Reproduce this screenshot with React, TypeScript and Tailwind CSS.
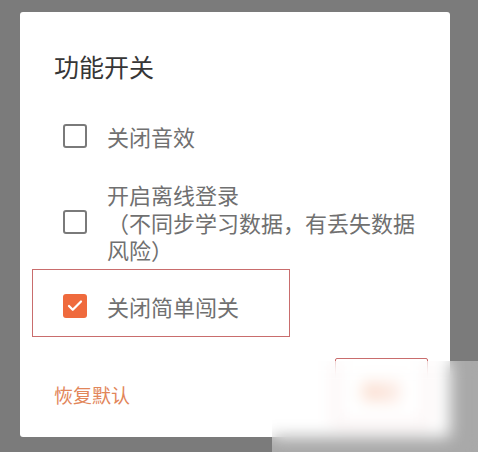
import { Check } from "lucide-react";

const font = { fontFamily: '"Noto Sans CJK SC", "Noto Sans", sans-serif' };

function Box({ checked }: { checked?: boolean }) {
    if (checked) {
        return (
            <span className="w-[24px] h-[24px] shrink-0 rounded-[3px] bg-[#ef6a3d] flex items-center justify-center">
                <Check size={18} strokeWidth={3} className="text-white" />
            </span>
        );
    }
    return <span className="w-[24px] h-[24px] shrink-0 rounded-[3px] border-[2.5px] border-[#7a7a7a] bg-white" />;
}

export default function App() {
    return (
        <div style={font} className="relative w-[478px] h-[452px] overflow-hidden bg-[#7b7b7b] pt-[12px] pl-[20px]">
            {/* Dialog */}
            <div className="w-[430px] h-[425px] bg-white rounded-[3px] flex flex-col pl-[12px] pt-[38px]">
                <h2 className="pl-[22px] text-[25px] leading-[32px] text-[#363636]">功能开关</h2>

                <div className="mt-[34px] h-[40px] pl-[31px] flex items-center gap-[20px]">
                    <Box />
                    <span className="text-[22px] leading-[27px] text-[#707070]">关闭音效</span>
                </div>

                <div className="mt-[25px] pl-[31px] flex items-center gap-[20px]">
                    <Box />
                    <div className="w-[318px] text-[22px] leading-[27.5px] text-[#707070]">
                        <p>开启离线登录</p>
                        <p>（不同步学习数据，有丢失数据风险）</p>
                    </div>
                </div>

                {/* Highlighted option */}
                <div className="mt-[5px] w-[258px] h-[68px] border-[1.5px] border-[#c96d6d] pl-[30px] pt-[24px] flex items-start gap-[20px]">
                    <Box checked />
                    <span className="text-[22px] leading-[24px] text-[#707070]">关闭简单闯关</span>
                </div>

                {/* Footer */}
                <div className="mt-[21px] flex items-start justify-between pr-[22px]">
                    <button className="pl-[22px] mt-[24px] text-[19px] leading-[26px] text-[#e2865a]">恢复默认</button>
                    <button className="w-[93px] h-[68px] border-[1.5px] border-[#c96d6d] rounded-[2px] flex items-center justify-center text-[19px] text-[#ef8a5a]">
                        确定
                    </button>
                </div>
            </div>

            {/* Blurred watermark overlay */}
            <div className="absolute left-[272px] top-[361px] w-[206px] h-[91px] backdrop-blur-[8px] bg-white/35" />
        </div>
    );
}
